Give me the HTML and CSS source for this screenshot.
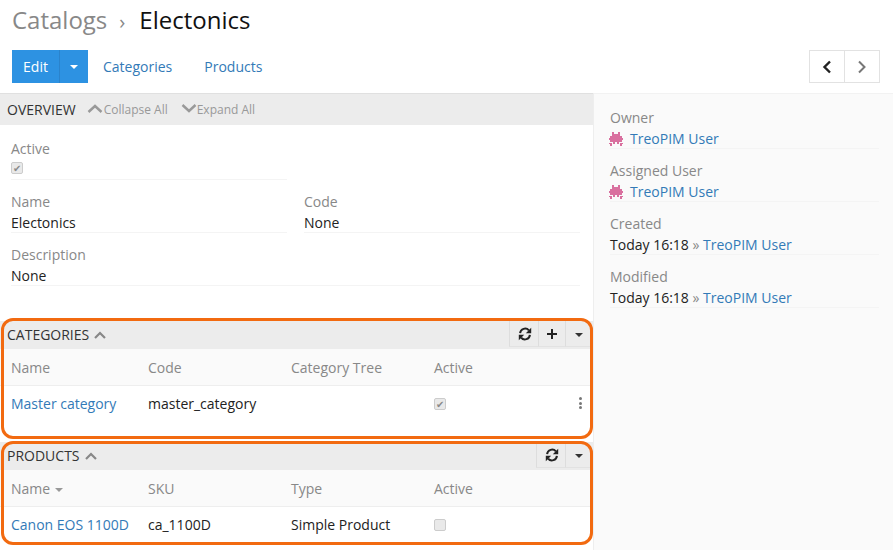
FILE: index.html
```html
<!DOCTYPE html>
<html>
<head>
  <title>Electonics - Catalogs</title>
  <link rel="stylesheet" href="styles.css">
</head>
<body>
  <svg class="icon-defs" width="0" height="0">
    <symbol id="bug" viewBox="0 0 14 14">
      <path d="M3 0h2v2H3zM9 0h2v2H9zM3 2h8v2h2v2h1v2h-1v2H1V8H0V6h1V4h2zM0 11h3v1H0zM11 11h3v1h-3zM1 12h2v2H1zM11 12h2v2h-2zM4 10h2v2H4zM8 10h2v2H8z"/>
    </symbol>
    <symbol id="sync" viewBox="0 0 14 14">
      <path d="M2.1 6.2A5 5 0 0 1 10.9 3.4M11.9 7.8A5 5 0 0 1 3.1 10.6" fill="none" stroke="currentColor" stroke-width="2"/>
      <path d="M13.2.8v5.4H7.8zM.8 13.2V7.8h5.4z"/>
    </symbol>
  </svg>

  <div class="page-top">
    <h1 class="title"><span class="crumb">Catalogs</span><span class="crumb-sep">›</span>Electonics</h1>
    <div class="toolbar">
      <div class="btn-group">
        <a class="btn-primary">Edit</a>
        <a class="btn-primary btn-caret"><span class="caret"></span></a>
      </div>
      <a class="tool-link">Categories</a>
      <a class="tool-link">Products</a>
      <div class="pager">
        <a class="pager-btn"><svg width="12" height="14" viewBox="0 0 12 14"><path d="M9 1.5 3.5 7 9 12.5" fill="none" stroke="#222" stroke-width="2.4"/></svg></a>
        <a class="pager-btn"><svg width="12" height="14" viewBox="0 0 12 14"><path d="M3 1.5 8.5 7 3 12.5" fill="none" stroke="#777" stroke-width="2"/></svg></a>
      </div>
    </div>
  </div>

  <div class="layout">
    <div class="main">
      <div class="bar">
        <span class="bar-title">OVERVIEW</span>
        <span class="bar-action"><svg width="16" height="9" viewBox="0 0 16 9"><path d="M1.5 8 8 2l6.5 6" fill="none" stroke="#999" stroke-width="2.4"/></svg>Collapse All</span>
        <span class="bar-action"><svg width="16" height="9" viewBox="0 0 16 9"><path d="M1.5 1 8 7l6.5-6" fill="none" stroke="#999" stroke-width="2.4"/></svg>Expand All</span>
      </div>

      <div class="overview">
        <div class="field field-half">
          <div class="label">Active</div>
          <div class="value value-check"><span class="check">✔</span></div>
        </div>
        <div class="field-row">
          <div class="field">
            <div class="label">Name</div>
            <div class="value">Electonics</div>
          </div>
          <div class="field">
            <div class="label">Code</div>
            <div class="value">None</div>
          </div>
        </div>
        <div class="field">
          <div class="label">Description</div>
          <div class="value">None</div>
        </div>
      </div>

      <div class="panel panel-categories">
        <div class="bar bar-panel">
          <span class="bar-title">CATEGORIES</span>
          <svg class="chev" width="12" height="8" viewBox="0 0 12 8"><path d="M1 7l5-5 5 5" fill="none" stroke="#888" stroke-width="2.2"/></svg>
          <div class="bar-btns">
            <a class="bar-btn"><svg width="14" height="14"><use href="#sync"/></svg></a>
            <a class="bar-btn"><svg width="12" height="12" viewBox="0 0 12 12"><path d="M5 1h2v4h4v2H7v4H5V7H1V5h4z"/></svg></a>
            <a class="bar-btn"><span class="caret caret-dark"></span></a>
          </div>
        </div>
        <div class="list-head">
          <span>Name</span><span>Code</span><span>Category Tree</span><span>Active</span>
        </div>
        <div class="list-row">
          <a>Master category</a><span>master_category</span><span></span>
          <span><span class="check">✔</span></span>
          <span class="dots"><i></i><i></i><i></i></span>
        </div>
        <div class="highlight"></div>
      </div>

      <div class="panel panel-products">
        <div class="bar bar-panel">
          <span class="bar-title">PRODUCTS</span>
          <svg class="chev" width="12" height="8" viewBox="0 0 12 8"><path d="M1 7l5-5 5 5" fill="none" stroke="#888" stroke-width="2.2"/></svg>
          <div class="bar-btns">
            <a class="bar-btn"><svg width="14" height="14"><use href="#sync"/></svg></a>
            <a class="bar-btn"><span class="caret caret-dark"></span></a>
          </div>
        </div>
        <div class="list-head">
          <span>Name <span class="caret caret-sort"></span></span><span>SKU</span><span>Type</span><span>Active</span>
        </div>
        <div class="list-row">
          <a>Canon EOS 1100D</a><span>ca_1100D</span><span>Simple Product</span>
          <span><span class="check"></span></span>
          <span></span>
        </div>
        <div class="highlight"></div>
      </div>
    </div>

    <div class="side">
      <div class="side-field">
        <div class="label">Owner</div>
        <div class="value"><svg class="avatar" width="14" height="14"><use href="#bug"/></svg><a>TreoPIM User</a></div>
      </div>
      <div class="side-field">
        <div class="label">Assigned User</div>
        <div class="value"><svg class="avatar" width="14" height="14"><use href="#bug"/></svg><a>TreoPIM User</a></div>
      </div>
      <div class="side-field">
        <div class="label">Created</div>
        <div class="value">Today 16:18 <span class="raquo">»</span> <a>TreoPIM User</a></div>
      </div>
      <div class="side-field">
        <div class="label">Modified</div>
        <div class="value">Today 16:18 <span class="raquo">»</span> <a>TreoPIM User</a></div>
      </div>
    </div>
  </div>
</body>
</html>
```

FILE: styles.css
```css
* { box-sizing: border-box; }
html, body { height: 100%; }
body {
  margin: 0;
  background: #fff;
  color: #222;
  font-family: "Open Sans", sans-serif;
  font-size: 14px;
  line-height: 20px;
  overflow: hidden;
}
a { color: #337ab7; text-decoration: none; }
.icon-defs { position: absolute; }

/* --- Header --- */
.page-top { height: 93px; padding: 4px 13px 0 12px; }
.title {
  margin: 0;
  font-size: 24px;
  font-weight: 400;
  line-height: 32px;
  color: #111;
}
.crumb { color: #888; }
.crumb-sep { color: #888; font-size: 20px; margin: 0 14px 0 12px; }
.toolbar { display: flex; align-items: center; margin-top: 12px; }
.btn-group { display: flex; margin-right: 15px; }
.btn-primary {
  display: flex;
  align-items: center;
  justify-content: center;
  height: 33px;
  width: 47px;
  background: #2d92e2;
  color: #fff;
}
.btn-caret { width: 29px; border-left: 1px solid #2a83cc; }
.caret {
  display: inline-block;
  border-left: 4px solid transparent;
  border-right: 4px solid transparent;
  border-top: 4px solid #fff;
}
.caret-dark { border-top-color: #333; }
.caret-sort { border-top-color: #999; vertical-align: middle; margin-left: 1px; }
.tool-link { margin-right: 32px; }
.pager { display: flex; margin-left: auto; }
.pager-btn {
  display: flex;
  align-items: center;
  justify-content: center;
  width: 36px;
  height: 33px;
  border: 1px solid #e2e2e2;
}
.pager-btn + .pager-btn { margin-left: -1px; }

/* --- Columns --- */
.layout { display: flex; height: 457px; }
.main { width: 594px; border-right: 1px solid #eee; }
.side { flex: 1; background: #fafafa; padding: 14px 14px 0 16px; border-top: 1px solid #f2f2f2; }

.label { color: #888; }
.value { border-bottom: 1px solid #f4f4f4; height: 21px; padding-top: 1px; color: #222; }

/* --- Bars --- */
.bar {
  display: flex;
  align-items: center;
  height: 32px;
  padding-left: 7px;
  background: #ececec;
  border-top: 1px solid #e0e0e0;
}
.bar-title { color: #333; }
.bar-action { display: flex; align-items: center; color: #999; font-size: 12px; margin-left: 11px; }
.bar-action + .bar-action { margin-left: 13px; }
.bar-action svg { margin: 0 1px 2px 0; }
.bar-action + .bar-action svg { margin-right: 0; }

/* --- Overview fields --- */
.overview { padding: 14px 13px 0 11px; height: 196px; }
.field { flex: 1; margin-bottom: 12px; }
.field-half { width: 276px; }
.field-row { display: flex; gap: 17px; }
.value-check { padding-top: 3px; }
.check {
  display: flex;
  align-items: center;
  justify-content: center;
  width: 12px;
  height: 12px;
  background: #e9e9e9;
  border: 1px solid #ccc;
  border-radius: 2px;
  color: #8a8a8a;
  font-size: 10px;
  line-height: 1;
}
.list-row .check { margin-top: 4px; }

/* --- Panels with lists --- */
.panel { position: relative; }
.bar-panel { height: 28px; border-top: 0; align-items: flex-start; }
.bar-panel .bar-title { margin-top: 4px; }
.chev { margin: 10px 0 0 5px; }
.bar-btns { display: flex; margin-left: auto; height: 26px; margin-right: 1px; }
.bar-btn {
  display: flex;
  align-items: center;
  justify-content: center;
  width: 27px;
  height: 100%;
  border-left: 1px solid #ddd;
  border-bottom: 1px solid #e2e2e2;
  color: #222;
  fill: #222;
}
.bar-btn:first-child { width: 29px; padding-left: 2px; }
.bar-btn .caret { margin-top: 3px; }
.list-head, .list-row {
  display: grid;
  grid-template-columns: 137px 143px 143px 1fr 20px;
  padding-left: 11px;
}
.list-head {
  height: 37px;
  align-items: center;
  padding-top: 2px;
  color: #888;
  background: #fafafa;
  border-bottom: 1px solid #eee;
}
.list-row { padding-top: 8px; }
.panel-categories { height: 121px; }
.panel-products { height: 103px; }
.dots { display: flex; flex-direction: column; gap: 1.5px; padding: 3px 0 0 6px; }
.dots i { width: 3px; height: 3px; border-radius: 50%; background: #777; }
.highlight {
  position: absolute;
  left: 1px;
  right: 0;
  border: 3px solid #f26a10;
  border-radius: 12px;
}
.panel-categories .highlight { top: -3px; bottom: 3px; }
.panel-products .highlight { top: -1px; bottom: 0; }

/* --- Side panel --- */
.side-field { margin-bottom: 12px; }
.avatar { fill: #d9709f; vertical-align: -2px; margin: 0 7px 0 -1px; }
.raquo { color: #888; }
```
